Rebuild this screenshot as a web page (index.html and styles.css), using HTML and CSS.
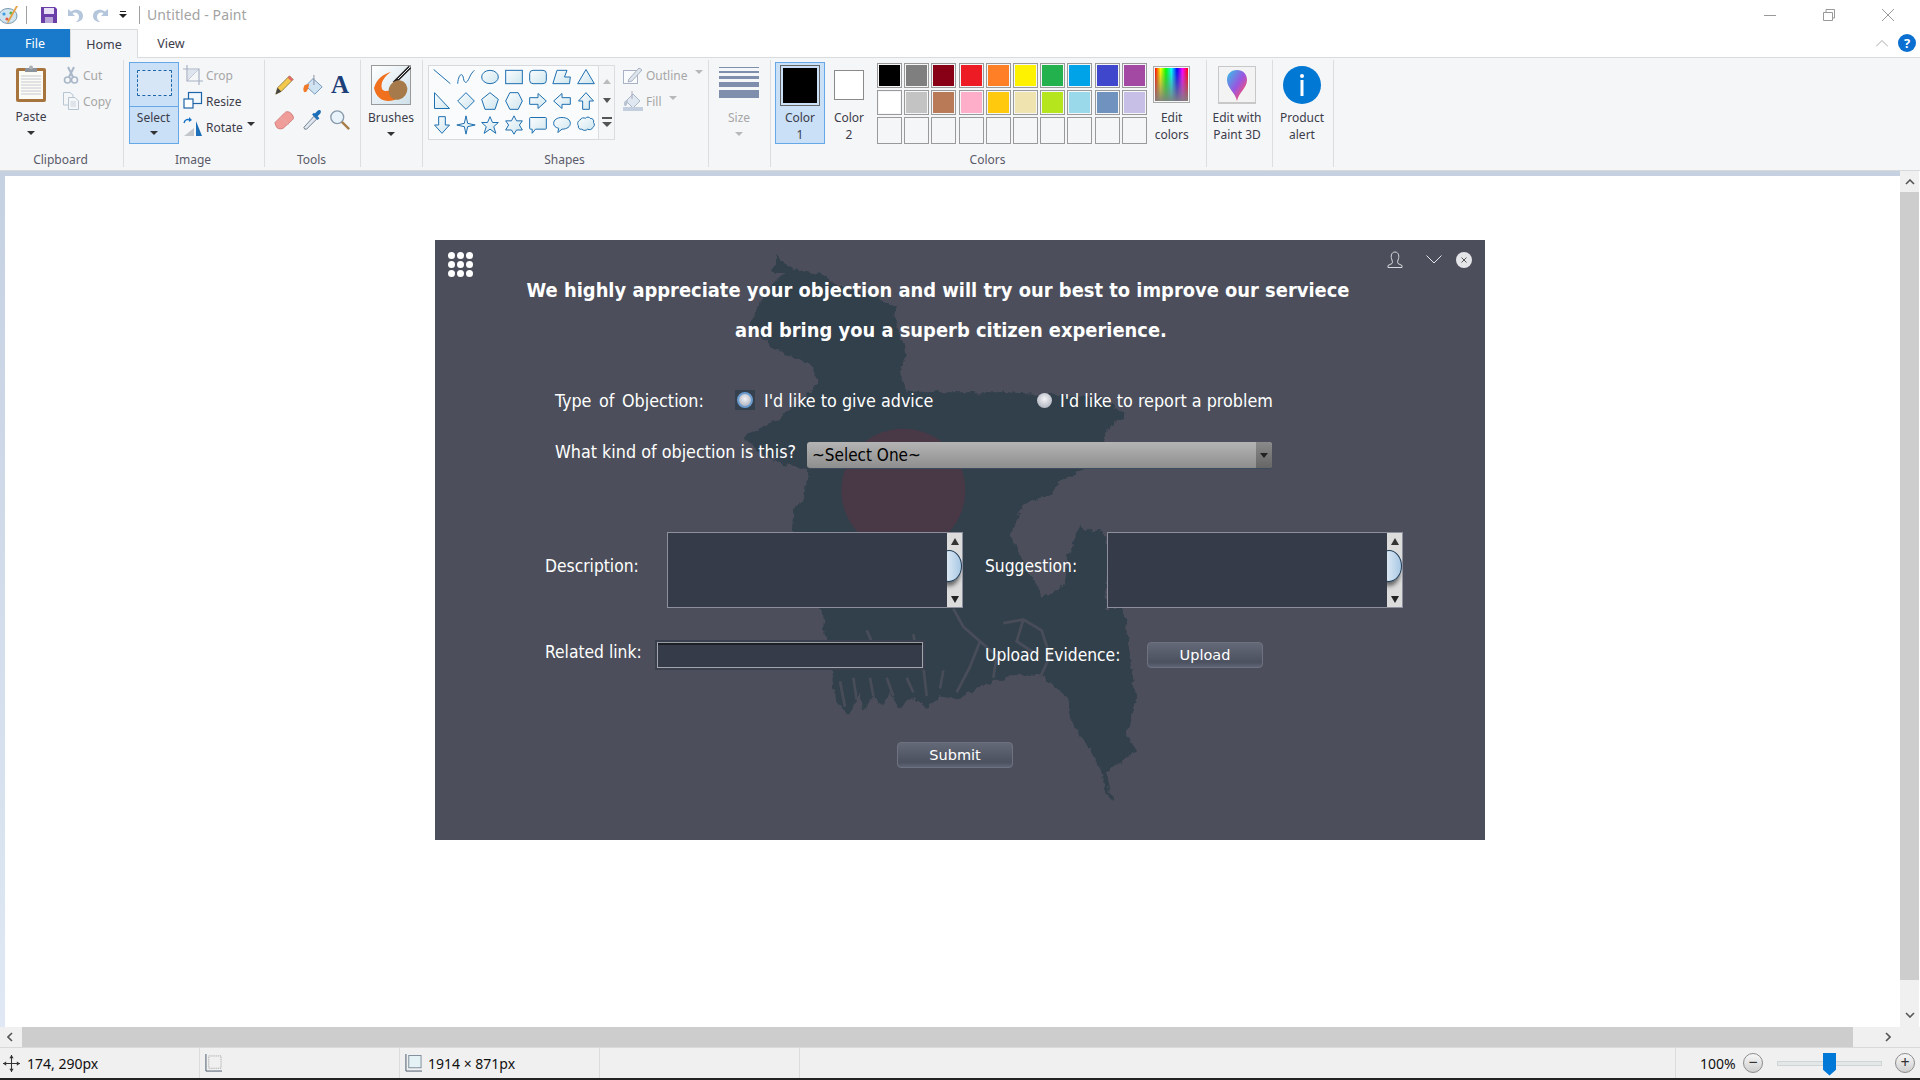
FILE: index.html
```html
<!DOCTYPE html>
<html lang="en">
<head>
<meta charset="utf-8">
<title>Untitled - Paint</title>
<link rel="stylesheet" href="styles.css">
</head>
<body>
<svg class="defs" width="0" height="0" aria-hidden="true"><defs>
  <linearGradient id="sg" x1="0" y1="0" x2="1" y2="1"><stop offset="0" stop-color="#fbfdfe"/><stop offset="1" stop-color="#cfe6ee"/></linearGradient>
  <linearGradient id="drop" x1="0" y1="0" x2="1" y2="1"><stop offset="0" stop-color="#2fc4e8"/><stop offset=".5" stop-color="#9a55e0"/><stop offset=".8" stop-color="#f0507a"/><stop offset="1" stop-color="#f09030"/></linearGradient>
  <linearGradient id="brushfill" x1="0" y1="0" x2="1" y2="1"><stop offset="0" stop-color="#fff"/><stop offset="1" stop-color="#cfe0ea"/></linearGradient>
  <filter id="rough" x="-5%" y="-5%" width="110%" height="110%"><feTurbulence type="fractalNoise" baseFrequency=".045" numOctaves="3" seed="4" result="n"/><feDisplacementMap in="SourceGraphic" in2="n" scale="22" xChannelSelector="R" yChannelSelector="G"/></filter>
</defs></svg>
<div class="app">
  <header class="titlebar">
    <svg class="t-app" viewBox="0 0 20 20"><ellipse cx="8" cy="11" rx="9" ry="7.5" fill="#cfe4ef" stroke="#7b99b0"/><circle cx="4" cy="9" r="1.6" fill="#3b9be0"/><circle cx="7" cy="14" r="1.6" fill="#e05a4a"/><circle cx="11" cy="8" r="1.6" fill="#5bb04a"/><path d="M18 1 L9 17 L7 19 L8 15 L16 1Z" fill="#e8a040"/></svg>
    <span class="t-sep"></span>
    <svg class="t-ico" viewBox="0 0 16 16"><path d="M0 0H14L16 2V16H0Z" fill="#6b3fa8"/><rect x="3" y="1" width="10" height="6" fill="#e8e0f4"/><rect x="4" y="10" width="8" height="6" fill="#b9a6d8"/></svg>
    <svg class="t-ico" viewBox="0 0 16 16"><path d="M1 2 V9 H8 L5.5 6.5 C8 4.5 12 6 12 10 C12 12 11 13.5 9 15 C13 15 16 12.500 16 9 C16 3 9 1 4 4.500Z" fill="#b4c6dc"/></svg>
    <svg class="t-ico" viewBox="0 0 16 16"><path d="M15 2 V9 H8 L10.500 6.500 C8 4.500 4 6 4 10 C4 12 5 13.500 7 15 C3 15 0 12.500 0 9 C0 3 7 1 12 4.500Z" fill="#b4c6dc"/></svg>
    <svg class="t-drop" viewBox="0 0 8 7"><rect x="1" y="0" width="6" height="1" fill="#222"/><path d="M0 3H8L4 7Z" fill="#222"/></svg>
    <span class="t-sep t-sep2"></span>
    <span class="t-title">Untitled - Paint</span>
    <div class="winbtns">
      <svg viewBox="0 0 12 12"><path d="M0 6.500H12" stroke="#999" fill="none"/></svg>
      <svg viewBox="0 0 12 12"><path d="M.5 3.500H9.500V11.500H.5Z M3 3V.5H11.500V9H10" stroke="#999" fill="none"/></svg>
      <svg viewBox="0 0 12 12"><path d="M0 0L12 12M12 0L0 12" stroke="#999" fill="none"/></svg>
    </div>
  </header>

  <nav class="tabs">
    <span class="tab tab-file">File</span>
    <span class="tab tab-home">Home</span>
    <span class="tab tab-view">View</span>
    <span class="tabs-fill"></span>
    <svg class="tab-caret" viewBox="0 0 12 7"><path d="M0 6.500L6 .5L12 6.500" stroke="#aaa" fill="none"/></svg>
    <span class="help">?</span>
  </nav>

  <section class="ribbon">
    <div class="grp g-clip">
      <div class="body">
        <div class="big w40">
          <svg class="ic38" viewBox="0 0 38 38"><rect x="4" y="3" width="30" height="34" rx="2" fill="#a8743e"/><rect x="7" y="6" width="24" height="28" fill="#fbfbf6"/><path d="M9 11H29M9 14H29M9 17H29M9 20H29M9 23H29M9 26H29M9 29H29" stroke="#c4c8d0"/><path d="M13 3H25V7H13Z" fill="#8d939a"/><circle cx="19" cy="2.500" r="2" fill="#aab0b6"/></svg>
          <span class="lbl">Paste</span><i class="arrow"></i>
        </div>
        <div class="smalls ml12">
          <div class="small off"><svg class="ic16" viewBox="0 0 16 18"><path d="M5 1L10 11M11 1L6 11" stroke="#a9b7c8" stroke-width="2" fill="none"/><circle cx="4.500" cy="14" r="3" fill="none" stroke="#a9b7c8" stroke-width="1.600"/><circle cx="11.500" cy="14" r="3" fill="none" stroke="#a9b7c8" stroke-width="1.600"/></svg><span>Cut</span></div>
          <div class="small off"><svg class="ic16" viewBox="0 0 16 18"><path d="M.5 .5H7L10 3V13H.5Z" fill="#f4f6f8" stroke="#b7c4d2"/><path d="M5.500 5.500H12L15.500 9V17.500H5.500Z" fill="#f4f6f8" stroke="#b7c4d2"/><path d="M7.500 10H13M7.500 12H13M7.500 14H13" stroke="#c8d2dc"/></svg><span>Copy</span></div>
        </div>
      </div>
      <div class="glabel">Clipboard</div>
    </div>

    <div class="grp g-image">
      <div class="body">
        <div class="select-btn">
          <div class="sel-top"><span class="sel-dash"></span></div>
          <div class="sel-bot"><span class="lbl">Select</span><i class="arrow"></i></div>
        </div>
        <div class="smalls ml4">
          <div class="small off wide"><svg class="ic20" viewBox="0 0 20 20"><path d="M4 0V16H20M0 4H16V20" fill="none" stroke="#a8b2c4" stroke-width="1.200"/><path d="M4 16L16 4" stroke="#a8b2c4"/><path d="M5 15V5H15Z" fill="#dfe5ee"/></svg><span>Crop</span></div>
          <div class="small wide"><svg class="ic20" viewBox="0 0 20 20"><rect x="5.500" y="1.500" width="13" height="11" fill="#f2f8fc" stroke="#1c65a8" stroke-width="1.200"/><rect x="1" y="8" width="9" height="9" fill="#fff" stroke="#1c65a8" stroke-width="1.200"/></svg><span>Resize</span></div>
          <div class="small wide"><svg class="ic20" viewBox="0 0 20 20"><path d="M1 6C2 2 5 2 7 3" stroke="#1874c8" stroke-width="1.400" fill="none"/><path d="M6 0L9 3L6 5Z" fill="#1874c8"/><path d="M1 19L11 11V19Z" fill="#c4c8cc"/><path d="M13 4L19 19H13Z" fill="#1c6fb8"/></svg><span>Rotate</span><i class="arrow arrow-inline"></i></div>
        </div>
      </div>
      <div class="glabel">Image</div>
    </div>

    <div class="grp g-tools">
      <div class="body">
        <div class="tools">
          <svg viewBox="0 0 24 24"><path d="M3 22L5 15L18 2L22 6L9 19Z" fill="#f2c94c" stroke="#6a5a2a" stroke-width=".7"/><path d="M18 2L22 6L20 8L16 4Z" fill="#e06a6a"/><path d="M3 22L5 15L9 19Z" fill="#444"/></svg>
          <svg viewBox="0 0 24 24"><path d="M4 13L12 5L22 14L14 22Z" fill="#cfe3f3" stroke="#6f93b5"/><path d="M13 1V12" stroke="#889"/><path d="M3 12C1 15 1 19 3 20C6 20 7 15 8 11Z" fill="#f07a2a"/></svg>
          <span class="tool-a">A</span>
          <svg viewBox="0 0 24 24"><path d="M2 15L13 4C15 2 18 3 20 5L22 8C23 10 22 11 21 12L11 21C9 22 6 22 4 20Z" fill="#f09c98" stroke="#d07a78"/><path d="M8 9L17 17" stroke="#e0b0ae"/></svg>
          <svg viewBox="0 0 24 24"><path d="M3 22L2 20L13 8L16 11L5 22Z" fill="#dfe6ee" stroke="#6a7a8c"/><path d="M12 7L17 12L19 10L17 8L20 5C22 2 19 0 17 2L14 5L13 4L11 6Z" fill="#1c6fb8"/></svg>
          <svg viewBox="0 0 24 24"><circle cx="9" cy="9" r="7" fill="#e9f3fb" stroke="#8a9cac" stroke-width="1.500"/><path d="M14 14L22 22" stroke="#a67c4a" stroke-width="2.500"/></svg>
        </div>
      </div>
      <div class="glabel">Tools</div>
    </div>

    <div class="grp g-brush">
      <div class="body">
        <div class="big w60">
          <svg class="ic40" viewBox="0 0 40 40"><rect x=".5" y=".5" width="39" height="39" fill="url(#brushfill)" stroke="#9a9a9a"/><path d="M39 2L23 18" stroke="#222" stroke-width="3.500"/><path d="M39 2L27 14" stroke="#eee" stroke-width="1"/><path d="M3 23C6 13 13 9 20 7C14 11 9 17 11 24C13 27 17 26 20 25L27 33C20 38 6 38 3 23Z" fill="#f0701e"/><ellipse cx="27" cy="25" rx="9" ry="10" transform="rotate(35 27 25)" fill="#a67a4a"/></svg>
          <span class="lbl">Brushes</span><i class="arrow"></i>
        </div>
      </div>
      <div class="glabel"></div>
    </div>

    <div class="grp g-shapes">
      <div class="body">
        <div class="gallery">
          <svg class="shp" viewBox="0 0 24 24"><path class="nofill" d="M2 3L22 20"/></svg>
          <svg class="shp" viewBox="0 0 24 24"><path class="nofill" d="M2 20C3 8 8 6 9 14C10 20 13 20 16 13C18 8 20 6 22 4"/></svg>
          <svg class="shp" viewBox="0 0 24 24"><ellipse cx="12" cy="12" rx="10" ry="8"/></svg>
          <svg class="shp" viewBox="0 0 24 24"><rect x="2" y="4" width="20" height="16"/></svg>
          <svg class="shp" viewBox="0 0 24 24"><rect x="2" y="4" width="20" height="16" rx="4"/></svg>
          <svg class="shp" viewBox="0 0 24 24"><path d="M1 20L6 4H18L15 12H22L21 20Z"/></svg>
          <svg class="shp" viewBox="0 0 24 24"><path d="M12 3L22 20H2Z"/></svg>
          <svg class="shp" viewBox="0 0 24 24"><path d="M3 2V21H21Z"/></svg>
          <svg class="shp" viewBox="0 0 24 24"><path d="M12 2L22 12L12 22L2 12Z"/></svg>
          <svg class="shp" viewBox="0 0 24 24"><path d="M12 2L22 10L18 22H6L2 10Z"/></svg>
          <svg class="shp" viewBox="0 0 24 24"><path d="M7 2H17L22 12L17 22H7L2 12Z"/></svg>
          <svg class="shp" viewBox="0 0 24 24"><path d="M2 8H12V3L22 12L12 21V16H2Z"/></svg>
          <svg class="shp" viewBox="0 0 24 24"><path d="M22 8H12V3L2 12L12 21V16H22Z"/></svg>
          <svg class="shp" viewBox="0 0 24 24"><path d="M8 22V12H3L12 2L21 12H16V22Z"/></svg>
          <svg class="shp" viewBox="0 0 24 24"><path d="M8 2V12H3L12 22L21 12H16V2Z"/></svg>
          <svg class="shp" viewBox="0 0 24 24"><path d="M12 1L14 10L23 12L14 14L12 23L10 14L1 12L10 10Z"/></svg>
          <svg class="shp" viewBox="0 0 24 24"><path d="M12 2L15 9H22L16.500 14L19 22L12 17L5 22L7.500 14L2 9H9Z"/></svg>
          <svg class="shp" viewBox="0 0 24 24"><path d="M12 1L15 7H22L18.500 12L22 18H15L12 23L9 18H2L5.500 12L2 7H9Z"/></svg>
          <svg class="shp" viewBox="0 0 24 24"><path d="M3 3H21Q22 3 22 4V16Q22 17 21 17H9L5 22V17H3Q2 17 2 16V4Q2 3 3 3Z"/></svg>
          <svg class="shp" viewBox="0 0 24 24"><path d="M12 3C18 3 22 6 22 10C22 14 18 17 12 17L7 21L8 16C4 15 2 13 2 10C2 6 6 3 12 3Z"/></svg>
          <svg class="shp" viewBox="0 0 24 24"><path d="M5 6C6 3 10 3 11 4C13 2 16 2 17 4C20 4 22 6 21 9C23 11 22 14 20 15C19 18 16 18 14 17C12 19 9 19 7 17C4 18 2 15 3 13C1 11 2 7 5 6Z"/></svg>
        </div>
        <div class="gal-scroll">
          <i class="tri up dis"></i><i class="tri down"></i><i class="tri-more"></i>
        </div>
        <div class="smalls ml7">
          <div class="small off wide"><svg class="ic20" viewBox="0 0 20 20"><rect x=".5" y="5.500" width="14" height="13" fill="#fafbfc" stroke="#a8b2c4"/><path d="M6 14L16 3L19 5L9 16L5 17Z" fill="#dde4ec" stroke="#a8b2c4"/></svg><span>Outline</span><i class="arrow arrow-inline dis"></i></div>
          <div class="small off wide"><svg class="ic20" viewBox="0 0 20 20"><path d="M3 10L10 3L17 10L10 17Z" fill="#dfe7f0" stroke="#aab7c6"/><path d="M9 0V8" stroke="#aab"/><path d="M2 10C0 13 1 15 3 15C4 14 5 12 5 9Z" fill="#b8c3d2"/><rect x="0" y="16" width="20" height="4" fill="#c3cfde"/></svg><span>Fill</span><i class="arrow arrow-inline dis"></i></div>
        </div>
      </div>
      <div class="glabel">Shapes</div>
    </div>

    <div class="grp g-size">
      <div class="body">
        <div class="big w60">
          <div class="sizes"><i class="s1"></i><i class="s2"></i><i class="s3"></i><i class="s4"></i><i class="s5"></i></div>
          <span class="lbl dim">Size</span><i class="arrow dis"></i>
        </div>
      </div>
      <div class="glabel"></div>
    </div>

    <div class="grp g-colors">
      <div class="body">
        <div class="color-btn active">
          <span class="cbox c1box"><i></i></span>
          <span class="lbl">Color<br>1</span>
        </div>
        <div class="color-btn">
          <span class="cbox c2box"></span>
          <span class="lbl">Color<br>2</span>
        </div>
        <div class="palette">
          <i class="k1"></i><i class="k2"></i><i class="k3"></i><i class="k4"></i><i class="k5"></i><i class="k6"></i><i class="k7"></i><i class="k8"></i><i class="k9"></i><i class="k10"></i>
          <i class="k11"></i><i class="k12"></i><i class="k13"></i><i class="k14"></i><i class="k15"></i><i class="k16"></i><i class="k17"></i><i class="k18"></i><i class="k19"></i><i class="k20"></i>
          <i class="k0"></i><i class="k0"></i><i class="k0"></i><i class="k0"></i><i class="k0"></i><i class="k0"></i><i class="k0"></i><i class="k0"></i><i class="k0"></i><i class="k0"></i>
        </div>
        <div class="big w50">
          <span class="edit-swatch"></span>
          <span class="lbl">Edit<br>colors</span>
        </div>
      </div>
      <div class="glabel">Colors</div>
    </div>

    <div class="grp g-3d">
      <div class="body">
        <div class="big wfull">
          <span class="p3d"><svg viewBox="0 0 24 34"><path d="M12 33C10 24 2 20 2 12C2 5 7 2 12 2C18 2 22 6 22 12C22 20 14 24 12 33Z" fill="url(#drop)"/></svg></span>
          <span class="lbl">Edit with<br>Paint 3D</span>
        </div>
      </div>
      <div class="glabel"></div>
    </div>

    <div class="grp g-alert">
      <div class="body">
        <div class="big wfull">
          <svg class="ic38" viewBox="0 0 38 38"><circle cx="19" cy="19" r="19" fill="#0078d4"/><circle cx="19" cy="10" r="2" fill="#fff"/><rect x="17.500" y="14" width="3" height="16" fill="#fff"/></svg>
          <span class="lbl">Product<br>alert</span>
        </div>
      </div>
      <div class="glabel"></div>
    </div>
  </section>

  <main class="workspace">
    <div class="canvas-wrap">
      <div class="canvas">
        <div class="dialog">
          <svg class="map" viewBox="0 0 1050 600" aria-hidden="true">
            <g transform="translate(305 5) scale(.33333 .36364)">
              <path class="land" d="M110 28L100 70L130 78L95 110L63 156L33 211L60 250L104 284L160 310L216 330L231 377L186 432L93 487L12 530L60 570L120 600L201 613L201 646L190 692L160 737L156 784L170 900L246 1012L256 1078L276 1188L285 1250L325 1295L345 1260L360 1230L370 1280L400 1240L430 1270L450 1230L480 1275L520 1240L560 1275L600 1240L640 1250L680 1240L712 1215L805 1187L900 1180L981 1243L991 1306L1044 1380L1080 1440L1110 1526L1115 1520L1100 1450L1176 1398L1197 1394L1157 1353L1188 1243L1173 1160L1157 1031L1140 998L1100 998L1100 810L1075 775L1060 790L1020 770L1010 790L985 860L975 930L930 965L905 960L850 870L810 800L830 760L850 710L930 690L960 650L1020 620L1085 570L1100 520L1120 490L1155 470L1130 450L1080 420L900 410L800 405L640 405L560 405L500 400L480 350L500 300L490 270L465 205L470 170L440 160L400 135L330 125L280 105L250 80L200 75L140 60Z"/>
              <path class="river" d="M640 1000L670 1050L720 1090L770 1130L760 1190M720 1090L690 1160L650 1230M790 1040L850 1030L905 1060L930 1130L900 1190M850 1030L830 1090L880 1120M300 1200L315 1270M340 1190L350 1250M390 1190L400 1240M440 1190L460 1240M500 1190L520 1230M550 1160L560 1240M610 1170L600 1220M380 1060L395 1090M520 1070L525 1095"/>
              <ellipse class="sun" cx="490" cy="675" rx="186" ry="170"/>
            </g>
          </svg>
          <div class="dlg-top">
            <div class="dots"><i></i><i></i><i></i><i></i><i></i><i></i><i></i><i></i><i></i></div>
            <div class="dlg-icons">
              <svg class="ic-user" viewBox="0 0 16 17"><path d="M5 9C3.500 6 4 1 8 1C12 1 12.500 6 11 9C10.500 10.500 10.500 12 11 12.500L15 14.500V16.500H1V14.500L5 12.500C5.500 12 5.500 10.500 5 9Z" fill="none" stroke="#d8d9dd"/></svg>
              <svg class="ic-chev" viewBox="0 0 16 9"><path d="M.5 .5L8 8L15.500 .5" fill="none" stroke="#e6e7ea"/></svg>
              <svg class="ic-x" viewBox="0 0 16 16"><circle cx="8" cy="8" r="8" fill="#e4e5e8"/><path d="M5.500 5.500L10.500 10.500M10.500 5.500L5.500 10.500" stroke="#555"/></svg>
            </div>
          </div>
          <h1 class="heading">We highly appreciate your objection and will try our best to improve our serviece<br><span class="line2">and bring you a superb citizen experience.</span></h1>
          <div class="row-type">
            <span class="l-type">Type of Objection:</span>
            <label class="opt opt1"><span class="radio-wrap"><i class="radio on"></i></span>I'd like to give advice</label>
            <label class="opt opt2"><i class="radio"></i>I'd like to report a problem</label>
          </div>
          <div class="row-what">
            <span class="l-what">What kind of objection is this?</span>
            <div class="combo"><span class="combo-val">~Select One~</span><span class="combo-btn"><i class="tri down dark"></i></span></div>
          </div>
          <div class="row-area">
            <span class="l-area">Description:</span>
            <div class="area">
              <div class="area-text"></div>
              <div class="vbar"><i class="tri up dark"></i><span class="vthumb"></span><i class="tri down dark"></i></div>
            </div>
            <span class="l-area l-second">Suggestion:</span>
            <div class="area">
              <div class="area-text"></div>
              <div class="vbar"><i class="tri up dark"></i><span class="vthumb"></span><i class="tri down dark"></i></div>
            </div>
          </div>
          <div class="row-link">
            <span class="l-link">Related link:</span>
            <div class="link-input"></div>
            <span class="l-up">Upload Evidence:</span>
            <button class="btn" type="button">Upload</button>
          </div>
          <div class="row-submit"><button class="btn" type="button">Submit</button></div>
        </div>
      </div>
    </div>
    <aside class="vscroll">
      <svg class="chev chev-up" viewBox="0 0 10 6"><path d="M1 5L5 1L9 5" fill="none" stroke="#555" stroke-width="1.600"/></svg>
      <span class="vscroll-thumb"></span>
      <svg class="chev" viewBox="0 0 10 6"><path d="M1 1L5 5L9 1" fill="none" stroke="#555" stroke-width="1.600"/></svg>
    </aside>
  </main>

  <div class="hscroll">
    <svg class="hchev" viewBox="0 0 6 10"><path d="M5 1L1 5L5 9" fill="none" stroke="#555" stroke-width="1.600"/></svg>
    <span class="hscroll-thumb"></span>
    <svg class="hchev hchev-r" viewBox="0 0 6 10"><path d="M1 1L5 5L1 9" fill="none" stroke="#555" stroke-width="1.600"/></svg>
  </div>

  <footer class="status">
    <div class="st-cell"><svg class="st-ic" viewBox="0 0 16 16"><path d="M8 0V16M0 8H16" stroke="#333"/><path d="M8 0L6 3H10ZM8 16L6 13H10ZM0 8L3 6V10ZM16 8L13 6V10Z" fill="#333"/></svg><span>174, 290px</span></div>
    <div class="st-cell st-sel"><svg class="st-ic" viewBox="0 0 18 20"><path d="M1 0V18M1 18H18" stroke="#456" /><rect x="4" y="2" width="13" height="13" fill="none" stroke="#999" stroke-dasharray="1 1"/></svg></div>
    <div class="st-cell st-dim"><svg class="st-ic" viewBox="0 0 18 20"><path d="M1 0V18M1 18H18" stroke="#456"/><rect x="4" y="1.500" width="13" height="13" fill="#e4f1f5" stroke="#7d8b99"/></svg><span>1914 × 871px</span></div>
    <div class="st-cell"></div>
    <div class="st-cell st-grow"></div>
    <div class="st-zoom">
      <span class="z-val">100%</span>
      <span class="z-btn">−</span>
      <span class="z-track"><i class="z-thumb"></i></span>
      <span class="z-btn">+</span>
    </div>
  </footer>
  <div class="blackline"></div>
</div>
</body>
</html>
```
FILE: styles.css
```css
* { box-sizing: border-box; }
html, body { margin: 0; padding: 0; }
body { width: 1920px; height: 1080px; overflow: hidden; background: #fff; font-family: "Noto Sans", "Open Sans", sans-serif; font-size: 12px; color: #3c3c4a; }
.defs { position: absolute; }
.app { width: 1920px; height: 1080px; display: flex; flex-direction: column; }
i { display: block; font-style: normal; }

/* title bar */
.titlebar { height: 29px; display: flex; align-items: center; background: #fff; }
.t-app { width: 20px; height: 20px; }
.t-sep { width: 1px; height: 18px; background: #a0a0a0; margin-left: 6px; margin-right: 14px; }
.t-ico { width: 16px; height: 16px; margin-right: 10px; }
.t-drop { width: 8px; height: 7px; }
.t-sep2 { margin-left: 12px; margin-right: 7px; }
.t-title { font-size: 14px; color: #a3a3a3; letter-spacing: .1px; }
.winbtns { margin-left: auto; display: flex; gap: 47px; padding-right: 26px; }
.winbtns svg { width: 12px; height: 12px; }

/* tabs */
.tabs { height: 29px; display: flex; align-items: stretch; border-bottom: 1px solid #dadbdc; background: #fff; }
.tab { display: flex; align-items: center; justify-content: center; font-size: 12.500px; color: #3c3c4a; height: 28px; }
.tab-file { width: 70px; background: #1979ca; color: #fff; }
.tab-home { width: 68px; background: #f5f6f8; border: 1px solid #dadbdc; border-bottom: 0; height: 29px; position: relative; }
.tab-view { width: 66px; }
.tabs-fill { flex: 1; }
.tab-caret { width: 12px; height: 7px; align-self: center; margin-right: 10px; }
.help { width: 18px; height: 18px; border-radius: 50%; background: #0a6fd0; color: #fff; font-weight: 700; font-size: 13px; line-height: 18px; text-align: center; align-self: center; margin-right: 4px; }

/* ribbon */
.ribbon { height: 113px; background: #f5f6f8; border-bottom: 1px solid #d8d9da; display: flex; padding-top: 2px; }
.grp { display: flex; flex-direction: column; height: 107px; border-right: 1px solid #dcdde0; flex: none; }
.body { height: 91px; display: flex; align-items: flex-start; }
.glabel { height: 16px; line-height: 17px; text-align: center; color: #5a5a68; font-size: 12px; padding-right: 2px; }
.g-clip { width: 124px; }
.g-clip .body { padding: 5px 0 0 11px; }
.g-image { width: 141px; }
.g-image .body { padding: 2px 0 0 5px; }
.g-tools { width: 96px; }
.g-tools .body { padding: 14px 0 0 8px; }
.g-brush { width: 62px; }
.g-brush .body { padding-top: 5px; }
.g-shapes { width: 286px; }
.g-shapes .body { padding: 2px 0 0 5px; }
.g-size { width: 62px; }
.g-size .body { padding-top: 7px; }
.g-colors { width: 436px; }
.g-colors .body { padding: 2px 0 0 4px; }
.g-3d { width: 66px; }
.g-3d .body { padding: 6px 5px 0 0; }
.g-alert { width: 61px; }
.g-alert .body { padding: 6px 2px 0 0; }

.big { display: flex; flex-direction: column; align-items: center; flex: none; }
.w40 { width: 40px; }
.w50 { width: 50px; }
.w60 { width: 60px; }
.wfull { width: 100%; }
.lbl { line-height: 17px; text-align: center; color: #3c3c4a; white-space: nowrap; }
.lbl.dim { color: #a6a6a6; }
.big .lbl { margin-top: 5px; }
.g-brush .big .lbl { margin-top: 4px; }
.arrow { width: 0; height: 0; border: 4px solid transparent; border-top-color: #333; border-bottom: 0; margin-top: 6px; }
.arrow.dis { border-top-color: #b8b8b8; }
.arrow-inline { margin: 0 0 0 1px; align-self: center; position: relative; top: -3px; }
.ic38 { width: 38px; height: 38px; }
.ic40 { width: 40px; height: 40px; }
.ic16 { width: 16px; height: 18px; flex: none; }
.ic20 { width: 20px; height: 20px; flex: none; }
.smalls { display: flex; flex-direction: column; }
.ml12 { margin-left: 12px; margin-top: -3px; }
.ml4 { margin-left: 4px; }
.ml7 { margin-left: 8px; }
.small { height: 26px; display: flex; align-items: center; gap: 4px; white-space: nowrap; color: #3c3c4a; }
.small.wide { gap: 3px; }
.small.off { color: #a6a6a6; }
.small.off .arrow-inline { margin-left: 4px; }

.select-btn { width: 50px; height: 82px; background: #c9e0f7; border: 1px solid #66a7e8; display: flex; flex-direction: column; align-items: center; flex: none; }
.sel-top { height: 44px; width: 100%; border-bottom: 1px solid #66a7e8; display: flex; align-items: center; justify-content: center; flex: none; }
.sel-dash { width: 35px; height: 26px; background: #d6e6f6; border: 1px dashed #1c65a8; margin-top: -3px; border-radius: 1px; }
.sel-bot { display: flex; flex-direction: column; align-items: center; padding: 2px 1px 0 0; }
.sel-bot .arrow { margin-top: 5px; }

.tools { display: grid; grid-template-columns: 22px 36px 18px; grid-auto-rows: 35px; justify-items: center; }
.tools svg { width: 22px; height: 22px; }
.tool-a { font: 700 25px/22px "Liberation Serif", serif; color: #1c3f78; }

.gallery { display: grid; grid-template-columns: repeat(7, 24px); grid-auto-rows: 24px; width: 171px; height: 75px; margin-top: 3px; border: 1px solid #d8d9dc; background: #fafbfc; padding: 0 0 0 1px; flex: none; }
.gallery .shp { margin-top: -1px; }
.shp { width: 24px; height: 24px; padding: 2px; fill: url(#sg); stroke: #1e6fb0; stroke-width: 1.200; overflow: visible; }
.shp .nofill { fill: none; }
.gal-scroll { width: 17px; height: 75px; margin-top: 3px; margin-left: -1px; border: 1px solid #dcdde0; display: flex; flex-direction: column; align-items: center; justify-content: space-around; padding: 6px 0; flex: none; }
.tri { width: 0; height: 0; border-left: 4px solid transparent; border-right: 4px solid transparent; flex: none; }
.tri.up { border-bottom: 5px solid #555; }
.tri.down { border-top: 5px solid #555; }
.tri.up.dis { border-bottom-color: #bcbcbc; }
.tri-more { width: 10px; height: 9px; border-top: 2px solid #555; position: relative; }
.tri-more::after { content: ""; position: absolute; left: 0; top: 3px; border-left: 5px solid transparent; border-right: 5px solid transparent; border-top: 5px solid #555; }

.sizes { width: 40px; height: 37px; display: flex; flex-direction: column; gap: 3px; }
.sizes i { background: #7e8eac; width: 40px; flex: none; }
.s1 { height: 1px; }
.s2 { height: 2px; }
.s3 { height: 3px; }
.s4 { height: 5px; }
.s5 { height: 8px; }

.color-btn { width: 50px; height: 82px; display: flex; flex-direction: column; align-items: center; border: 1px solid transparent; flex: none; }
.color-btn.active { background: #c9e0f7; border-color: #66a7e8; }
.color-btn .lbl { display: block; }
.color-btn + .color-btn { width: 42px; margin-left: 3px; }
.cbox { display: block; }
.c1box { width: 40px; height: 41px; margin-top: 2px; border: 1px solid #666; background: #c9e0f7; padding: 2px; flex: none; }
.c1box i { width: 100%; height: 100%; background: #000; }
.c2box { width: 30px; height: 30px; margin-top: 7px; margin-bottom: 9px; background: #fff; border: 1px solid #8a8a8a; flex: none; }
.c1box + .lbl { margin-top: 3px; }
.palette { display: grid; grid-template-columns: repeat(10, 25px); grid-template-rows: 25px 25px 27px; column-gap: 2.200px; row-gap: 2px; margin-left: 7px; margin-top: 1px; flex: none; }
.palette i { border: 1px solid #9a9a9a; outline: 1px solid #f5f6f8; outline-offset: -2px; }
.k0 { background: #f5f6f8; }
.k1 { background: #000; } .k2 { background: #7f7f7f; } .k3 { background: #880015; } .k4 { background: #ed1c24; } .k5 { background: #ff7f27; }
.k6 { background: #fff200; } .k7 { background: #22b14c; } .k8 { background: #00a2e8; } .k9 { background: #3f48cc; } .k10 { background: #a349a4; }
.k11 { background: #fff; } .k12 { background: #c3c3c3; } .k13 { background: #b97a57; } .k14 { background: #ffaec9; } .k15 { background: #ffc90e; }
.k16 { background: #efe4b0; } .k17 { background: #b5e61d; } .k18 { background: #99d9ea; } .k19 { background: #7092be; } .k20 { background: #c8bfe7; }
.w50 { margin-top: 4px; }
.w50 .lbl { margin-top: 6px; }
.edit-swatch { width: 37px; height: 37px; border: 2px solid #f5f6f8; outline: 1px solid #aaa; outline-offset: -1px; background: linear-gradient(to bottom, rgba(255,255,255,0) 0, rgba(128,128,128,.95) 100%), linear-gradient(to right, #f00, #ff0, #0f0, #0ff, #00f, #f0f, #f00); }
.p3d { width: 38px; height: 38px; background: #f3f3f3; border: 1px solid #c8c8c8; border-bottom-width: 2px; display: flex; align-items: center; justify-content: center; }
.p3d svg { width: 24px; height: 34px; }

/* workspace */
.workspace { flex: 1; display: flex; min-height: 0; }
.canvas-wrap { flex: 1; min-width: 0; background: linear-gradient(to bottom, #c5d0e1, #dfe8f4); padding: 5px 0 0 5px; overflow: hidden; }
.canvas { height: 100%; background: #fff; padding: 64px 0 0 430px; }
.vscroll { width: 20px; background: #f0f0f0; display: flex; flex-direction: column; align-items: center; border-right: 1px solid #fff; }
.chev { width: 10px; height: 6px; margin: 0; flex: none; }
.chev-up { margin: 8px 0 7px; }
.vscroll-thumb { width: 100%; height: 788px; background: #cdcdcd; flex: none; margin-bottom: 32px; }

.hscroll { height: 20px; background: #f0f0f0; display: flex; align-items: center; }
.hchev { width: 6px; height: 10px; margin: 0 9px 0 7px; flex: none; }
.hscroll-thumb { width: 1831px; height: 100%; background: #cdcdcd; }
.hchev-r { margin-left: 32px; }

/* status */
.status { height: 31px; background: #f0f0f0; border-top: 1px solid #d9d9d9; display: flex; color: #111; font-size: 14px; }
.st-cell { width: 200px; display: flex; align-items: center; border-right: 1px solid #dcdcdc; padding-left: 3px; gap: 7px; }
.st-sel { padding-left: 5px; }
.st-dim { padding-left: 5px; gap: 6px; }
.st-ic { width: 17px; height: 19px; flex: none; }
.st-grow { flex: 1; width: auto; }
.st-zoom { width: 244px; display: flex; align-items: center; padding-left: 24px; }
.z-val { width: 37px; }
.z-btn { width: 20px; height: 20px; border-radius: 50%; border: 1px solid #8c8c8c; background: linear-gradient(#f8f8f8, #cfcfcf); font-size: 16px; line-height: 16px; text-align: center; color: #333; margin-left: 6px; flex: none; }
.z-track { width: 105px; height: 5px; background: #e3e7e7; border: 1px solid #cfd4d4; margin-left: 14px; margin-right: 7px; position: relative; }
.z-thumb { position: absolute; left: 45px; top: -9px; width: 13px; height: 23px; background: #0078d7; clip-path: polygon(0 0, 100% 0, 100% 75%, 50% 100%, 0 75%); }
.blackline { height: 2px; background: #222; }

/* dialog */
.dialog { width: 1050px; height: 600px; background: #4c4f5b; position: relative; color: #fff; font-family: "DejaVu Sans", sans-serif; font-stretch: condensed; font-size: 17.300px; }
.dialog > *:not(.map) { position: relative; }
.map { position: absolute; inset: 0; width: 1050px; height: 600px; }
.land { fill: #313f4c; filter: url(#rough); }
.river { fill: none; stroke: #484d59; stroke-width: 8; }
.sun { fill: #493846; }
.dlg-top { height: 31px; display: flex; justify-content: space-between; padding: 12px 13px 0 13px; }
.dots { display: grid; grid-template-columns: repeat(3, 7px); grid-auto-rows: 7px; gap: 2px; width: 25px; }
.dots i { background: #fff; border-radius: 50%; }
.dlg-icons { display: flex; align-items: flex-start; }
.ic-user { width: 16px; height: 17px; margin-top: -1px; }
.ic-chev { width: 16px; height: 9px; margin: 3px 0 0 23px; }
.ic-x { width: 16px; height: 16px; margin: 0 0 0 14px; }
.heading { margin: 0; font: 700 19.900px/40px "DejaVu Sans", sans-serif; font-stretch: condensed; text-align: center; padding-right: 44px; width: 1050px; }
.line2 { display: inline-block; margin-left: 26px; }
.row-type { display: flex; align-items: center; height: 30px; margin: 34px 0 0 120px; font-size: 17.800px; }
.l-type { width: 180px; word-spacing: 2.500px; white-space: nowrap; }
.opt { display: flex; align-items: center; white-space: nowrap; }
.opt1 { width: 301px; }
.radio-wrap { width: 20px; height: 20px; background: #34404e; display: flex; align-items: center; justify-content: center; margin-right: 9px; flex: none; }
.radio { width: 15px; height: 15px; border-radius: 50%; background: radial-gradient(circle at 50% 40%, #f4f4f8, #b9bcc6 70%); flex: none; }
.radio.on { width: 16px; height: 16px; border: 2px solid #6b9ccf; }
.opt2 .radio { margin: 0 8px 0 1px; }
.row-what { display: flex; align-items: flex-start; margin: 27px 0 0 120px; height: 26px; }
.l-what { width: 252px; line-height: 20px; white-space: nowrap; font-size: 17.800px; }
.combo { width: 465px; height: 26px; display: flex; border-radius: 3px; background: linear-gradient(#b4b4b4, #8e8e8e); box-shadow: 0 1px 0 #3b4a5c; }
.combo-val { flex: 1; color: #000; line-height: 27px; padding-left: 5px; font-size: 17px; }
.combo-btn { width: 16px; background: linear-gradient(#8a8a8a, #666); border-radius: 0 3px 3px 0; display: flex; align-items: center; justify-content: center; }
.tri.dark.down { border-top-color: #222; }
.tri.dark.up { border-bottom-color: #333; }
.row-area { display: flex; margin: 64px 0 0 110px; height: 76px; }
.l-area { width: 122px; line-height: 68px; white-space: nowrap; }
.l-second { margin-left: 22px; }
.area { width: 296px; height: 76px; display: flex; border: 1px solid #8d909c; flex: none; }
.area-text { flex: 1; background: #363b4a; }
.vbar { width: 15px; background: #dcdcdc; display: flex; flex-direction: column; align-items: center; justify-content: space-between; padding: 5px 0 4px; position: relative; overflow: hidden; }
.vbar .tri { border-left-width: 4px; border-right-width: 4px; }
.vbar .tri.up { border-bottom-width: 7px; }
.vbar .tri.down { border-top-width: 7px; }
.vthumb { position: absolute; right: 0; top: 17px; width: 26px; height: 32px; border-radius: 50%; background: linear-gradient(to right, #fff, #a8c8e4); border: 1px solid #1f3a55; box-shadow: 0 6px 4px -2px #666; }
.row-link { display: flex; align-items: flex-start; margin: 34px 0 0 110px; height: 26px; }
.l-link { width: 112px; line-height: 20px; white-space: nowrap; }
.link-input { width: 266px; height: 26px; background: #363b4a; border: 1px solid #a3a5ad; border-top-color: #9a9ca4; box-shadow: 0 0 0 2px #3b404f, inset 0 2px 0 #1d1f27; flex: none; }
.l-up { width: 162px; margin-left: 62px; line-height: 26px; white-space: nowrap; }
.btn { width: 116px; height: 26px; padding: 0; border: 1px solid #6e7280; border-radius: 4px; background: linear-gradient(#646978 0, #555a69 50%, #4c5160 80%, #5f6476 100%); color: #fff; font: 14.500px "DejaVu Sans", sans-serif; }
.row-submit { margin: 74px 0 0 462px; }
```
